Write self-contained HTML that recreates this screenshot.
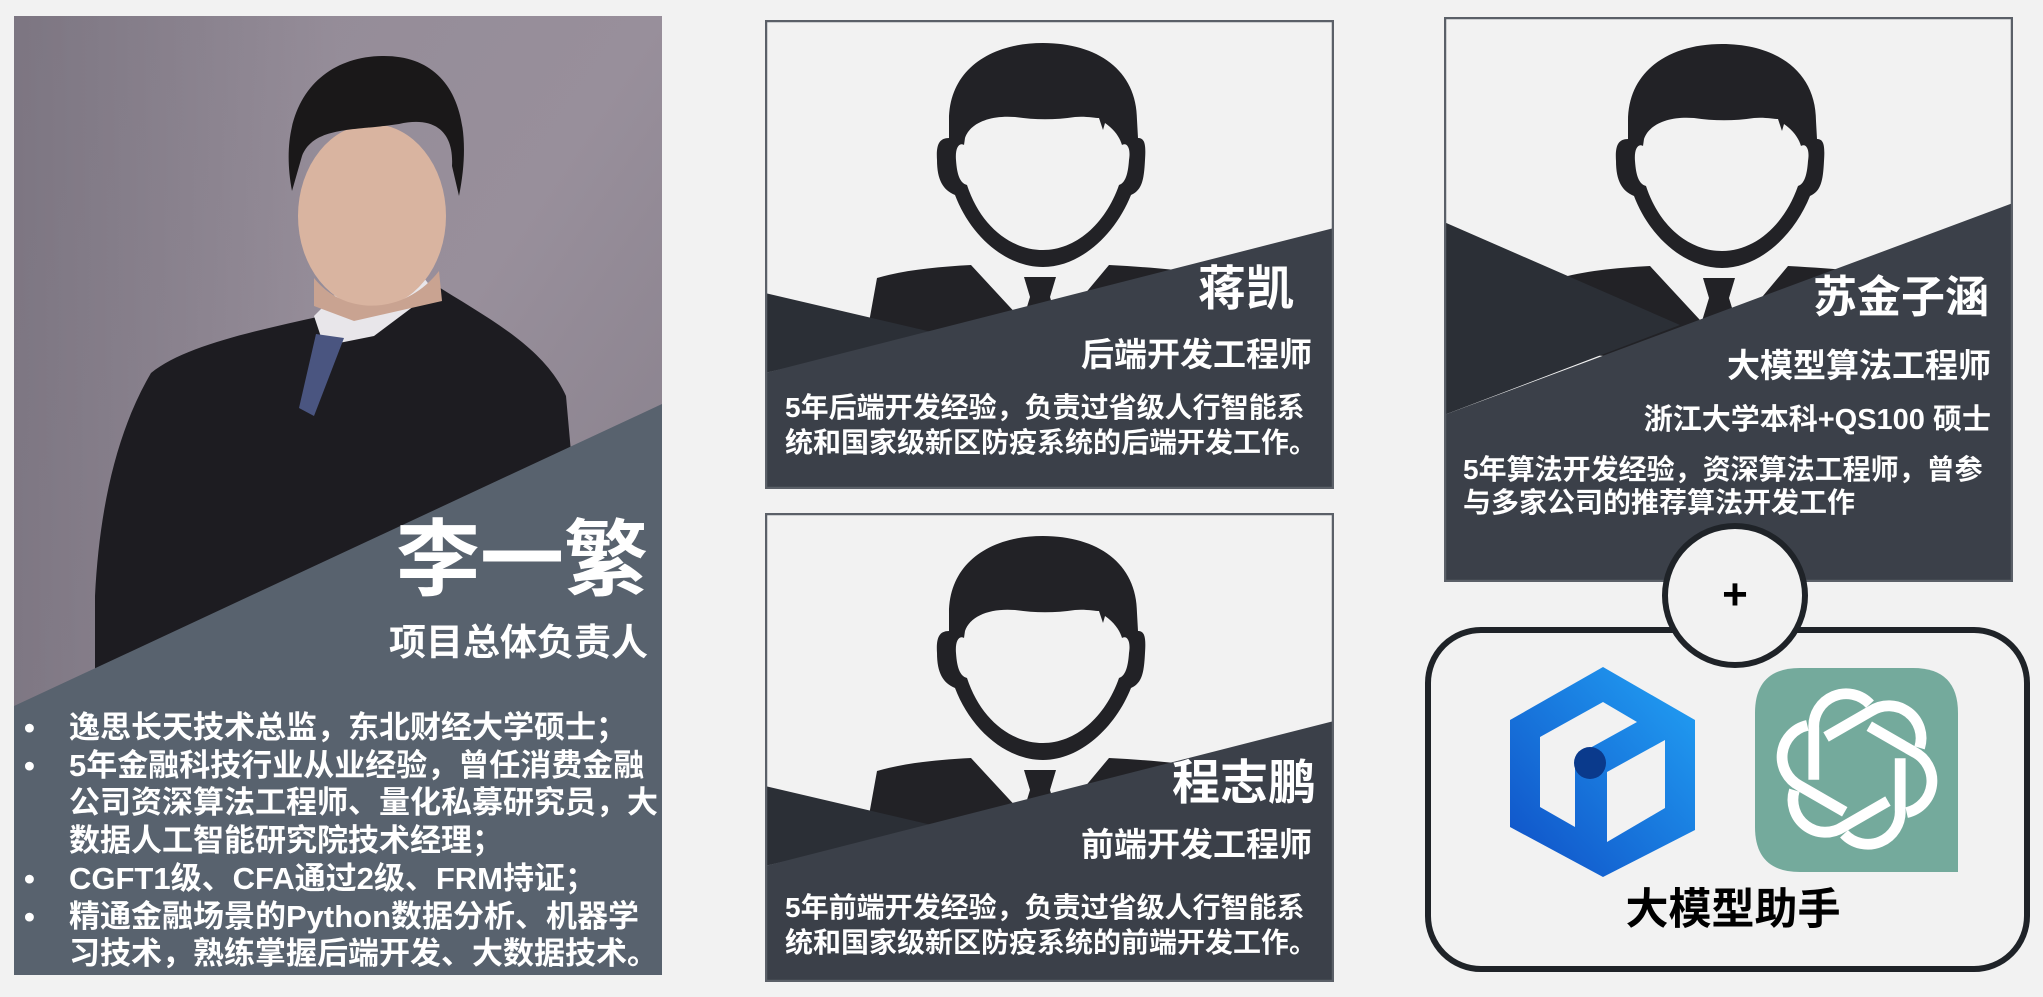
<!DOCTYPE html>
<html><head><meta charset="utf-8">
<style>
html,body{margin:0;padding:0;}
body{width:2043px;height:997px;background:#f2f2f2;position:relative;overflow:hidden;font-family:"Liberation Sans","Noto Sans CJK SC",sans-serif;font-weight:700;color:#fff;}
.abs{position:absolute;}
.t{position:absolute;white-space:nowrap;line-height:1;}
.r{text-align:right;}
.bl{position:relative;padding-left:41px;}
.bl.b::before{content:"•";position:absolute;left:-4px;}
</style></head><body>

<!-- LEFT CARD -->
<div class="abs" style="left:14px;top:16px;width:648px;height:959px;overflow:hidden;">
<svg width="648" height="959" viewBox="0 0 648 959" style="position:absolute;left:0;top:0">
<defs>
<linearGradient id="bg1" x1="0" y1="0" x2="1" y2="1">
<stop offset="0" stop-color="#928a96"/><stop offset="0.5" stop-color="#988f9b"/><stop offset="1" stop-color="#7e7782"/>
</linearGradient>
<linearGradient id="sh" x1="0" y1="0" x2="1" y2="0">
<stop offset="0" stop-color="#6e6874" stop-opacity="0.6"/><stop offset="0.5" stop-color="#6e6874" stop-opacity="0"/>
</linearGradient>
</defs>
<rect width="648" height="959" fill="url(#bg1)"/>
<rect width="648" height="959" fill="url(#sh)"/>
<path d="M137 357 C170 330 240 315 308 300 L420 268 C470 300 530 330 552 380 L560 470 L560 620 L300 700 L81 700 L81 580 C85 500 100 420 137 357 Z" fill="#1d1c21"/>
<path d="M300 300 L330 270 L410 262 L420 275 L360 320 L310 330 Z" fill="#e8e6ea"/>
<path d="M302 318 L330 322 L300 400 L285 392 Z" fill="#4a5580"/>
<ellipse cx="358" cy="200" rx="74" ry="92" fill="#d9b4a0"/>
<path d="M278 175 C262 90 305 40 370 40 C435 40 462 95 445 180 L438 150 C440 115 420 100 385 108 C340 115 300 110 288 140 Z" fill="#1a1819"/>
<path d="M300 262 C330 300 390 300 425 255 L428 285 L340 305 L300 290 Z" fill="#c9a391"/>
<polygon points="0,690 648,388 648,959 0,959" fill="#58626e"/>
</svg>
<div class="t r" style="right:14px;top:502px;font-size:84px;">李一繁</div>
<div class="t r" style="right:14px;top:608px;font-size:37px;">项目总体负责人</div>
<div class="abs" style="left:14px;top:693px;font-size:31px;line-height:37.7px;white-space:nowrap;">
<div class="bl b">逸思长天技术总监，东北财经大学硕士；</div>
<div class="bl b">5年金融科技行业从业经验，曾任消费金融</div>
<div class="bl">公司资深算法工程师、量化私募研究员，大</div>
<div class="bl">数据人工智能研究院技术经理；</div>
<div class="bl b">CGFT1级、CFA通过2级、FRM持证；</div>
<div class="bl b">精通金融场景的Python数据分析、机器学</div>
<div class="bl">习技术，熟练掌握后端开发、大数据技术。</div>
</div>
</div>

<svg width="0" height="0" style="position:absolute">
<defs>
<g id="man">
<path d="M99 330 L112 258 C140 250 170 247 206 245 L268 312 L288 312 L344 245 C400 248 440 252 470 262 L470 360 Z" fill="#222226"/>
<polygon points="259,257 291,257 285,277 292,300 275,318 258,300 265,277" fill="#222226"/>
<path d="M184 100 C184 50 225 23 278 23 C332 23 372 50 372 100 L373 118 C380 118 381 125 380 140 C379 160 377 170 366 175 C350 215 315 247 278 247 C240 247 205 215 190 175 C178 170 172 160 172 140 C171 125 174 118 184 118 Z" fill="#222226"/>
<path d="M200 118 C205 103 225 95 250 97 C270 100 290 100 310 97 C320 96 330 98 334 98 L338 110 L340 103 C350 110 355 118 357 125 C362 122 366 128 364 140 C363 155 360 163 354 165 C340 205 310 230 278 230 C245 230 215 205 202 165 C195 163 192 155 191 140 C190 128 194 122 199 125 Z" fill="#f2f2f2"/>
</g>
</defs>
</svg>

<!-- MIDDLE TOP CARD -->
<div class="abs" style="left:765px;top:20px;width:569px;height:469px;">
<svg width="569" height="469" viewBox="0 0 569 469" style="position:absolute;left:0;top:0">
<rect width="569" height="469" fill="#f2f2f2"/>
<use href="#man"/>
<polygon points="0,273 171,313 0,353" fill="#2b2f36"/>
<polygon points="0,353 569,208 569,469 0,469" fill="#3b4049"/>
<rect x="1" y="1" width="567" height="467" fill="none" stroke="#5b6068" stroke-width="2.5"/>
</svg>
<div class="t r" style="right:40px;top:246px;font-size:48px;">蒋凯</div>
<div class="t r" style="right:22px;top:318px;font-size:33px;">后端开发工程师</div>
<div class="t" style="left:20px;top:370px;font-size:28px;line-height:35px;">5年后端开发经验，负责过省级人行智能系<br>统和国家级新区防疫系统的后端开发工作。</div>
</div>

<!-- MIDDLE BOTTOM CARD -->
<div class="abs" style="left:765px;top:513px;width:569px;height:469px;">
<svg width="569" height="469" viewBox="0 0 569 469" style="position:absolute;left:0;top:0">
<rect width="569" height="469" fill="#f2f2f2"/>
<use href="#man"/>
<polygon points="0,273 171,313 0,353" fill="#2b2f36"/>
<polygon points="0,353 569,208 569,469 0,469" fill="#3b4049"/>
<rect x="1" y="1" width="567" height="467" fill="none" stroke="#5b6068" stroke-width="2.5"/>
</svg>
<div class="t r" style="right:18px;top:247px;font-size:48px;">程志鹏</div>
<div class="t r" style="right:22px;top:315px;font-size:33px;">前端开发工程师</div>
<div class="t" style="left:20px;top:377px;font-size:28px;line-height:35px;">5年前端开发经验，负责过省级人行智能系<br>统和国家级新区防疫系统的前端开发工作。</div>
</div>

<!-- RIGHT CARD -->
<div class="abs" style="left:1444px;top:17px;width:569px;height:565px;">
<svg width="569" height="565" viewBox="0 0 569 565" style="position:absolute;left:0;top:0">
<rect width="569" height="565" fill="#f2f2f2"/>
<g transform="translate(0,4)"><use href="#man"/></g>
<polygon points="0,205 236,308 0,398" fill="#2b2f36"/>
<polygon points="0,398 569,186 569,565 0,565" fill="#3b4049"/>
<rect x="1" y="1" width="567" height="563" fill="none" stroke="#5b6068" stroke-width="2.5"/>
</svg>
<div class="t r" style="right:24px;top:259px;font-size:44px;">苏金子涵</div>
<div class="t r" style="right:22px;top:332px;font-size:33px;">大模型算法工程师</div>
<div class="t r" style="right:22px;top:389px;font-size:29px;">浙江大学本科+QS100 硕士</div>
<div class="t" style="left:19px;top:436px;font-size:28px;line-height:33px;">5年算法开发经验，资深算法工程师，曾参<br>与多家公司的推荐算法开发工作</div>
</div>

<!-- ROUNDED BOX -->
<div class="abs" style="left:1425px;top:627px;width:593px;height:333px;border:6px solid #1f2328;border-radius:56px;background:#f2f2f2;"></div>
<div class="abs" style="left:1662px;top:523px;width:134px;height:133px;border:6px solid #1f2328;border-radius:50%;background:#f2f2f2;"></div>
<div class="t" style="left:1713px;top:573px;font-size:44px;color:#000;width:44px;text-align:center;">+</div>

<svg class="abs" style="left:0;top:0" width="2043" height="997" viewBox="0 0 2043 997">
<defs>
<linearGradient id="bl" x1="1" y1="0" x2="0" y2="1">
<stop offset="0" stop-color="#22a2f5"/><stop offset="1" stop-color="#0f4fc6"/>
</linearGradient>
<path id="lk" d="M -40 10 L -40 -38 A 30 30 0 0 1 12 -60"/>
</defs>
<polygon points="1603,667 1695,720 1695,830 1603,877 1510,827 1510,720" fill="url(#bl)"/>
<polygon points="1540,737 1603,702 1637,722 1590,748 1575,763 1575,827 1540,807" fill="#f2f2f2"/>
<polygon points="1607,772 1665,740 1665,808 1607,842" fill="#f2f2f2"/>
<circle cx="1590" cy="763" r="16" fill="#0a3a8c"/>
<path d="M1800 668 L1913 668 Q1958 668 1958 713 L1958 872 L1800 872 Q1755 872 1755 827 L1755 713 Q1755 668 1800 668 Z" fill="#74aa9c"/>
<g transform="translate(1857,769) scale(1.08)" fill="none" stroke="#fff" stroke-width="10" stroke-linejoin="round">
<use href="#lk"/>
<use href="#lk" transform="rotate(60)"/>
<use href="#lk" transform="rotate(120)"/>
<use href="#lk" transform="rotate(180)"/>
<use href="#lk" transform="rotate(240)"/>
<use href="#lk" transform="rotate(300)"/>
</g>
</svg>
<div class="t" style="left:1625px;top:889px;width:216px;text-align:center;font-size:43px;color:#000;">大模型助手</div>

</body></html>
